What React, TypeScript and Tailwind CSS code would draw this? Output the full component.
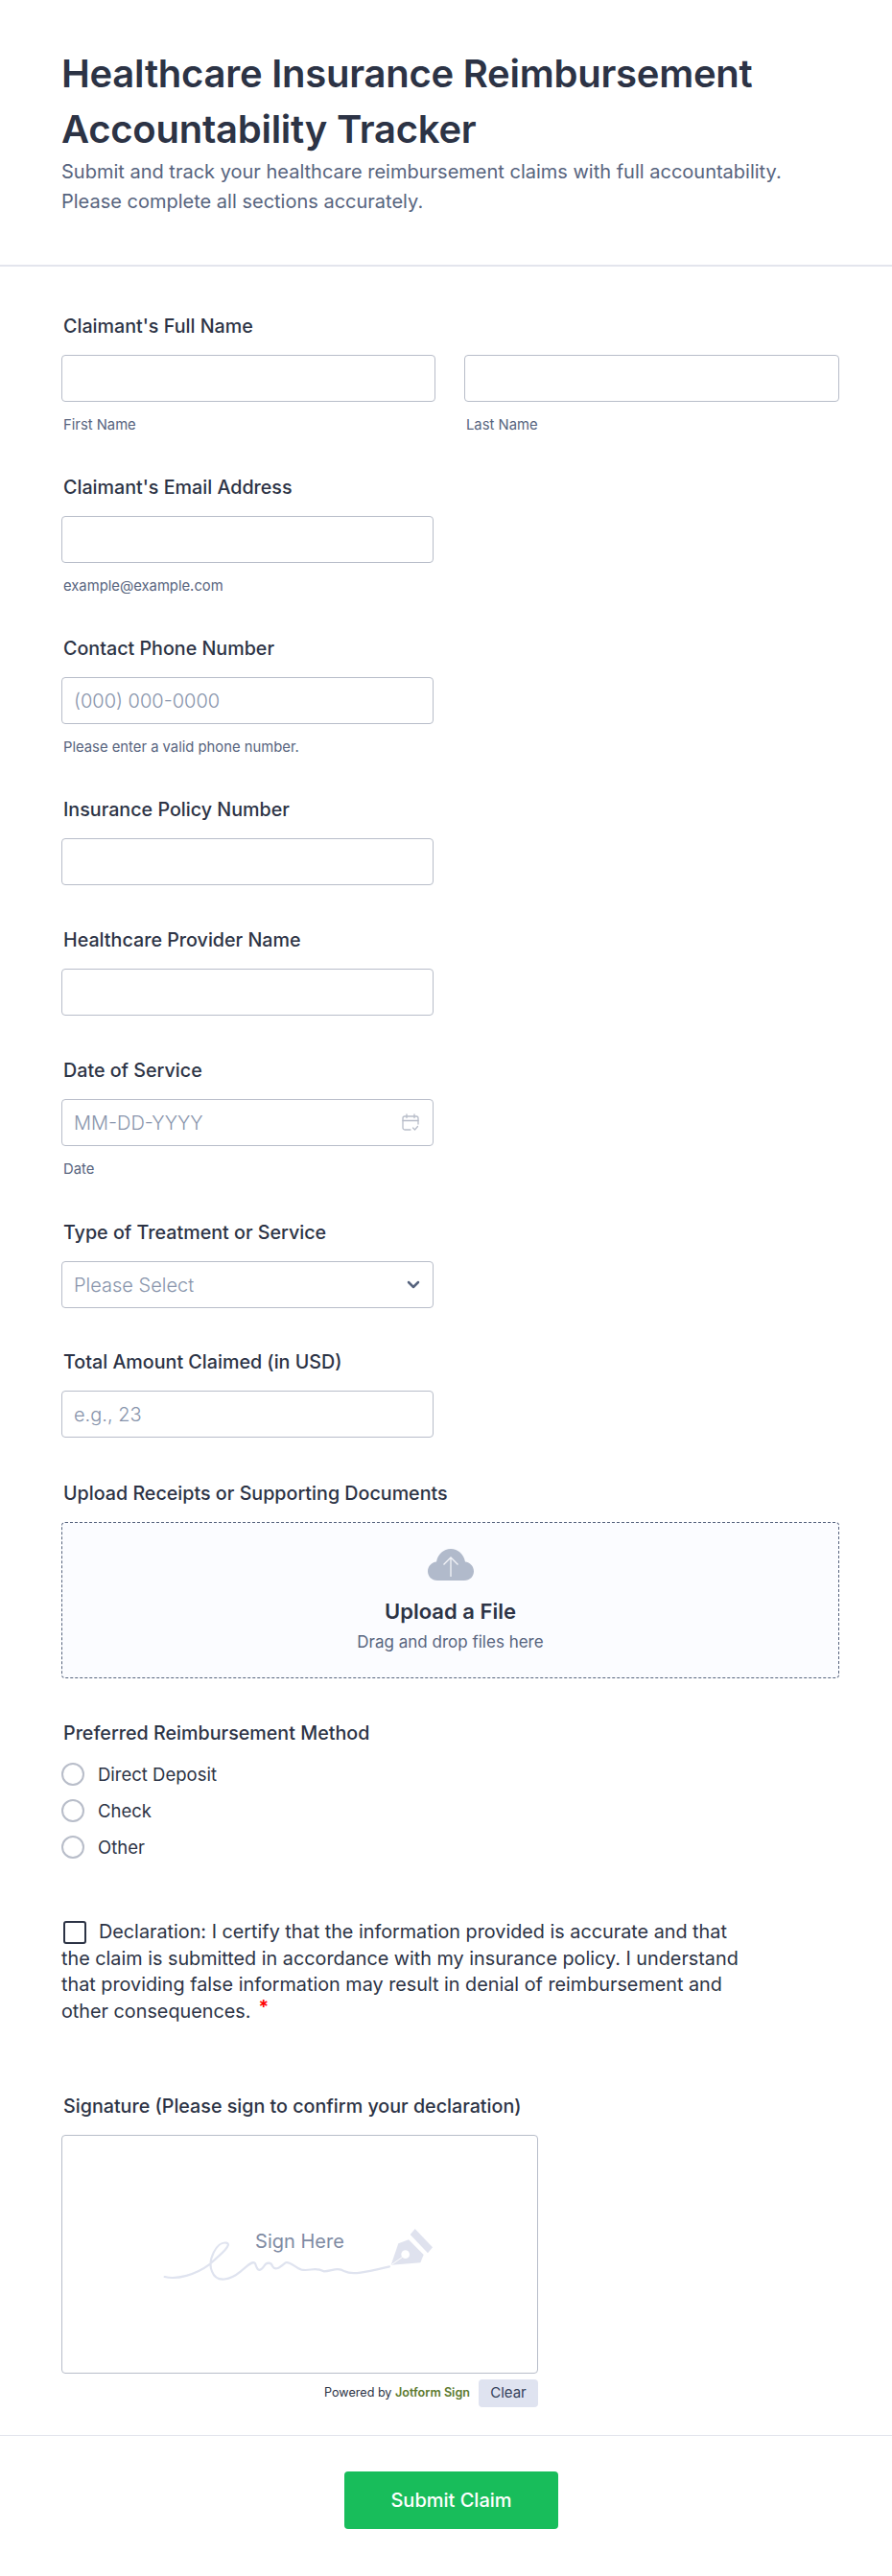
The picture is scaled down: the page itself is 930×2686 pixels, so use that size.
const font = { fontFamily: 'Inter, "Liberation Sans", sans-serif' };

function Label({ children }: { children: React.ReactNode }) {
  return <div className="ml-[2px] text-[19.700px] leading-[27px] font-medium text-[#2c3345] mb-[16px]">{children}</div>;
}

function Sub({ children }: { children: React.ReactNode }) {
  return <div className="ml-[2px] mt-[14px] text-[14.800px] leading-[20px] text-[#57647e]">{children}</div>;
}

function TextBox({ placeholder, className }: { placeholder?: string; className?: string }) {
  return (
    <input
      placeholder={placeholder}
      className={`block h-[49px] rounded-[4px] border border-[#b8bdc9] bg-white px-3 text-[20px] font-light text-[#2c3345] placeholder:text-[#8894ab] outline-none ${className ?? 'w-[388px]'}`}
    />
  );
}

export default function App() {
  return (
    <div className="min-h-[2686px] bg-white" style={font}>
      <header className="h-[278px] border-b-2 border-[#e3e5ed] px-16 pt-[48px]">
        <h1 className="text-[40px] leading-[58px] font-semibold tracking-[-0.250px] text-[#2c3345] max-w-[800px]">Healthcare Insurance Reimbursement Accountability Tracker</h1>
        <p className="text-[20px] leading-[31px] text-[#57647e] max-w-[800px]">Submit and track your healthcare reimbursement claims with full accountability. Please complete all sections accurately.</p>
      </header>

      <main className="pl-16 pr-[55px] pt-[49px]">
        <section className="h-[168px]">
          <Label>Claimant's Full Name</Label>
          <div className="flex gap-[30px]">
            <div className="w-[390px]">
              <TextBox className="w-full" />
              <Sub>First Name</Sub>
            </div>
            <div className="w-[391px]">
              <TextBox className="w-full" />
              <Sub>Last Name</Sub>
            </div>
          </div>
        </section>

        <section className="h-[168px]">
          <Label>Claimant's Email Address</Label>
          <TextBox />
          <Sub>example@example.com</Sub>
        </section>

        <section className="h-[168px]">
          <Label>Contact Phone Number</Label>
          <TextBox placeholder="(000) 000-0000" />
          <Sub>Please enter a valid phone number.</Sub>
        </section>

        <section className="h-[136px]">
          <Label>Insurance Policy Number</Label>
          <TextBox />
        </section>

        <section className="h-[136px]">
          <Label>Healthcare Provider Name</Label>
          <TextBox />
        </section>

        <section className="h-[169px]">
          <Label>Date of Service</Label>
          <div className="relative w-[388px]">
            <TextBox placeholder="MM-DD-YYYY" className="w-full" />
            <svg className="absolute right-[15px] top-[15px] w-[18px] h-[19px]" viewBox="0 0 18 19" fill="none" stroke="#b8bdc9" strokeWidth="1.3" strokeLinecap="round" strokeLinejoin="round">
              <path d="M9 17H3a2 2 0 0 1-2-2V5a2 2 0 0 1 2-2h12a2 2 0 0 1 2 2v6" />
              <path d="M1 7.500h16M5 1v3.500M13 1v3.500" />
              <path d="M11.500 15l2 2 3-3.500" />
            </svg>
          </div>
          <Sub>Date</Sub>
        </section>

        <section className="h-[135px]">
          <Label>Type of Treatment or Service</Label>
          <div className="flex items-center justify-between w-[388px] h-[49px] rounded-[4px] border border-[#b8bdc9] bg-white px-3 text-[20px] font-light text-[#8894ab]">
            <span>Please Select</span>
            <svg className="w-[14px] h-[9px] mr-[1px]" viewBox="0 0 14 9" fill="none" stroke="#57647e" strokeWidth="2.500" strokeLinecap="round" strokeLinejoin="round">
              <path d="M2 2l5 5 5-5" />
            </svg>
          </div>
        </section>

        <section className="h-[137px]">
          <Label>Total Amount Claimed (in USD)</Label>
          <TextBox placeholder="e.g., 23" />
        </section>

        <section className="h-[250px]">
          <Label>Upload Receipts or Supporting Documents</Label>
          <div className="flex flex-col items-center w-[811px] h-[163px] rounded-[4px] border border-dashed border-[#57647e] bg-[#fbfcff] pt-[27px]">
            <svg className="w-[48px] h-[33px]" viewBox="0 0 48 33">
              <path d="M10 33C4 33 0 28.500 0 23.500 0 18 4 14 9 13.500 10.500 5.500 16.500 0 24 0s13.500 5.500 15 13.500C44 14 48 18 48 23.500 48 28.500 44 33 38 33Z" fill="#b1bacb" />
              <path d="M24 29V9M16.500 16.500 24 9l7.500 7.500" fill="none" stroke="#f3f4f8" strokeWidth="1.3" />
            </svg>
            <div className="mt-[16px] text-[22px] leading-[32px] font-semibold text-[#2c3345]">Upload a File</div>
            <div className="mt-[4px] text-[17px] leading-[24px] text-[#57647e]">Drag and drop files here</div>
          </div>
        </section>

        <section className="h-[207px]">
          <div className="ml-[2px] text-[19.700px] leading-[27px] font-medium text-[#2c3345] mb-[17px]">Preferred Reimbursement Method</div>
          <div className="flex flex-col gap-[14px]">
            {['Direct Deposit', 'Check', 'Other'].map((o) => (
              <div key={o} className="flex items-center gap-[14px]">
                <span className="w-[24px] h-[24px] rounded-full border-2 border-[#b8bdc9] bg-white" />
                <span className="text-[18.500px] leading-[24px] text-[#2c3345]">{o}</span>
              </div>
            ))}
          </div>
        </section>

        <section className="h-[182px] w-[720px] text-[19.800px] leading-[27.500px] text-[#2c3345]">
          <span className="inline-block align-[-6px] w-[24px] h-[24px] ml-[2px] mr-[13px] rounded-[3px] border-2 border-[#2c3345] bg-white" />
          Declaration: I certify that the information provided is accurate and that the claim is submitted in accordance with my insurance policy. I understand that providing false information may result in denial of reimbursement and other consequences.
          <span className="ml-[8px] align-[4px] leading-none text-[#f00] font-semibold">*</span>
        </section>

        <section className="w-[497px]">
          <Label>Signature (Please sign to confirm your declaration)</Label>
          <div className="relative flex items-center justify-center h-[249px] rounded-[4px] border border-[#b8bdc9] bg-white">
            <svg className="w-[330px] h-[110px] ml-[6px] mt-[9px]" viewBox="0 0 990 330" fill="none">
              <path d="M62 222C100 232 160 215 200 185C240 150 275 120 255 116C225 110 195 170 210 205C225 245 270 230 300 205C320 190 335 170 345 180C350 195 355 212 372 190C380 175 395 175 400 190C410 205 425 190 440 178C455 172 470 195 490 200C520 205 530 190 560 205C585 205 600 190 625 205C650 218 700 205 765 190" stroke="#dfe3ef" strokeWidth="6.500" strokeLinecap="round" />
              <path d="M770 185L793 118L825 106L872 153L862 178Z" fill="#dfe2ee" />
              <path d="M845 72L900 130L885 148L830 90Z" fill="#dfe2ee" />
              <circle cx="815" cy="152" r="13" fill="#fff" />
              <path d="M772 184L806 160" stroke="#fff" strokeWidth="3" />
            </svg>
            <span className="absolute left-0 right-0 top-[97px] text-center text-[20px] leading-[26px] text-[#7f8ba3]">Sign Here</span>
          </div>
          <div className="flex items-center justify-end mt-[6px] h-[29px]">
            <span className="text-[12.600px] text-[#2c3345] mr-[9px]">Powered by <span className="font-semibold text-[#5c7a2e]">Jotform Sign</span></span>
            <span className="flex items-center justify-center w-[62px] h-[29px] rounded-[4px] bg-[#dfe3f0] text-[15px] text-[#34405a]">Clear</span>
          </div>
        </section>
      </main>

      <footer className="mt-[29px] border-t border-[#e3e5ed] flex justify-center pt-[37px] pl-[11px]">
        <button className="w-[223px] h-[60px] rounded-[4px] bg-[#18bd5b] text-white text-[20px] font-medium">Submit Claim</button>
      </footer>
    </div>
  );
}
